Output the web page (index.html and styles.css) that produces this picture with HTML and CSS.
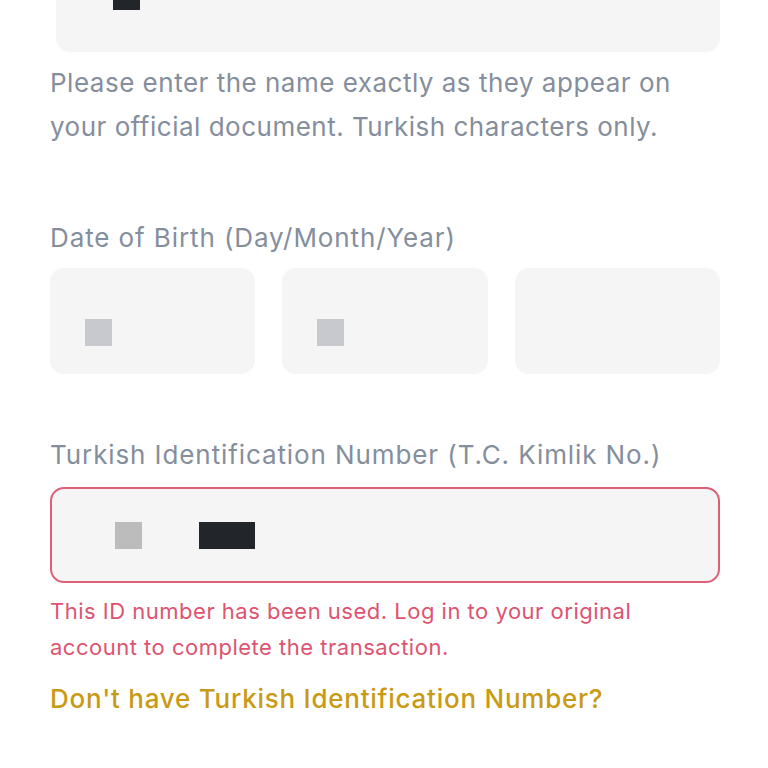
FILE: index.html
```html
<!DOCTYPE html>
<html lang="en">
<head>
    <meta charset="UTF-8">
    <meta name="viewport" content="width=device-width, initial-scale=1.0">
    <title>Identity Verification</title>
    <link rel="stylesheet" href="styles.css">
</head>
<body>
    <div class="form">
        <div class="input input-top">
            <span class="blob blob-dark blob-top"></span>
        </div>
        <p class="hint">Please enter the name exactly as they appear on<br>your official document. Turkish characters only.</p>

        <label class="label label-dob">Date of Birth (Day/Month/Year)</label>
        <div class="dob-row">
            <div class="input input-dob"><span class="blob blob-light"></span></div>
            <div class="input input-dob"><span class="blob blob-light"></span></div>
            <div class="input input-dob"></div>
        </div>

        <label class="label label-id">Turkish Identification Number (T.C. Kimlik No.)</label>
        <div class="input input-id error">
            <span class="blob blob-grey"></span>
            <span class="blob blob-dark blob-wide"></span>
        </div>
        <p class="error-text">This ID number has been used. Log in to your original<br>account to complete the transaction.</p>

        <a class="link" href="#">Don't have Turkish Identification Number?</a>
    </div>
</body>
</html>
```

FILE: styles.css
```css
body {
    margin: 0;
    background: #fff;
    font-family: Inter, Roboto, "Liberation Sans", sans-serif;
}
.form {
    padding: 0 48px 0 50px;
}
.input {
    background: #f5f5f5;
    border-radius: 14px;
    box-sizing: border-box;
    display: flex;
    align-items: center;
}
.input-top {
    height: 52px;
    margin-left: 6px;
    border-radius: 0 0 14px 14px;
    align-items: flex-start;
    padding-left: 57px;
}
.hint {
    margin: 9px 0 0;
    font-size: 26px;
    line-height: 44px;
    letter-spacing: 0.5px;
    color: #848e9c;
}
.label {
    display: block;
    font-size: 26px;
    line-height: 36px;
    letter-spacing: 0.9px;
    color: #848e9c;
}
.label-dob {
    margin-top: 71px;
}
.dob-row {
    display: grid;
    grid-template-columns: 1fr 1fr 1fr;
    gap: 27px;
    margin-top: 12px;
}
.input-dob {
    height: 106px;
    padding-left: 35px;
    padding-top: 22px;
}
.label-id {
    margin-top: 63px;
}
.input-id {
    margin-top: 14px;
    height: 96px;
    padding: 0 0 0 63px;
    gap: 57px;
}
.input-id.error {
    border: 2px solid #dd6077;
}
.blob {
    display: inline-block;
    width: 27px;
    height: 27px;
}
.blob-top {
    height: 10px;
}
.blob-dark {
    background: #22262b;
}
.blob-wide {
    width: 56px;
}
.blob-grey {
    background: #bcbcbc;
}
.blob-light {
    background: #c8c9ce;
}
.error-text {
    margin: 10px 0 0;
    font-size: 22px;
    line-height: 36px;
    letter-spacing: 0.5px;
    color: #dd5470;
}
.link {
    display: block;
    margin-top: 16px;
    font-size: 26px;
    line-height: 36px;
    letter-spacing: 0.75px;
    font-weight: 500;
    color: #c99a14;
    text-decoration: none;
}
```
